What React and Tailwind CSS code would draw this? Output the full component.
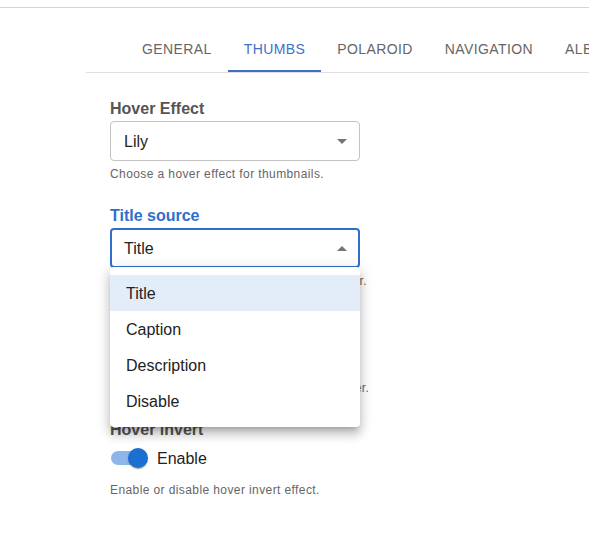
import React from "react";

const tabs = ["General", "Thumbs", "Polaroid", "Navigation", "Albums"];

const Arrow = ({ up }) => (
  <svg width="10" height="5" viewBox="0 0 10 5" className="shrink-0">
    <path d={up ? "M0 5 5 0l5 5z" : "M0 0l5 5 5-5z"} fill="#757575" />
  </svg>
);

const Field = ({ label, value, helper, focused, open }) => (
  <div className="mb-5">
    <div
      className={`text-base leading-6 font-bold ${
        focused ? "text-[#2f6fcb]" : "text-[#555555]"
      }`}
    >
      {label}
    </div>
    <div
      className={`h-10 flex items-center justify-between rounded-[4px] ${
        focused ? "border-2 border-[#2f6fcb] pl-[12px] pr-[11px]" : "border border-[#c4c4c4] pl-[13px] pr-3"
      }`}
    >
      <span className="relative top-px text-base text-[#222222]">{value}</span>
      <Arrow up={open} />
    </div>
    <div className="mt-[3px] text-xs leading-5 tracking-[0.4px] text-[#666666] whitespace-nowrap">
      {helper}
    </div>
  </div>
);

export default function App() {
  return (
    <div className="relative w-[589px] h-[536px] overflow-hidden bg-white font-['Liberation_Sans',Arial,sans-serif]">
      <div className="mt-[7px] h-px bg-[#d4d4d4]" />

      {/* tabs */}
      <div className="mt-4 ml-[86px] flex border-b border-[#e0e0e0] overflow-hidden">
        <div className="w-10 shrink-0" />
        {tabs.map((t) => {
          const active = t === "Thumbs";
          return (
            <div
              key={t}
              className={`relative h-12 px-4 pt-[2px] flex items-center shrink-0 text-sm uppercase tracking-[0.4px] ${
                active ? "text-[#3d72c9]" : "text-[#666666]"
              }`}
            >
              {t}
              {active && (
                <span className="absolute left-0 right-0 bottom-0 h-[2px] bg-[#3d70c4]" />
              )}
            </div>
          );
        })}
      </div>

      {/* form */}
      <div className="ml-[110px] w-[250px] pt-[24px]">
        <Field
          label="Hover Effect"
          value="Lily"
          helper="Choose a hover effect for thumbnails."
        />
        <Field
          label="Title source"
          value="Title"
          helper="Select the source of the title for thumb hover."
          focused
          open
        />
        <Field
          label="Description source"
          value="Caption"
          helper="Select the source of the caption on the hover."
        />

        <div className="text-base leading-6 font-bold text-[#555555]">
          Hover invert
        </div>
        <div className="h-8 flex items-center">
          <div className="relative ml-px w-[34px] h-[14px] rounded-full bg-[#8db7ea]">
            <span className="absolute -right-[3px] -top-[3px] w-5 h-5 rounded-full bg-[#1b6fd0] shadow-[0_2px_1px_-1px_rgba(0,0,0,0.2),0_1px_1px_0_rgba(0,0,0,0.14),0_1px_3px_0_rgba(0,0,0,0.12)]" />
          </div>
          <span className="relative top-px ml-[12px] text-base text-[#222222]">Enable</span>
        </div>
        <div className="mt-[6px] text-xs leading-5 tracking-[0.4px] text-[#666666] whitespace-nowrap">
          Enable or disable hover invert effect.
        </div>
      </div>

      {/* open menu */}
      <div className="absolute left-[110px] top-[267px] w-[250px] py-2 rounded-[4px] bg-white shadow-[0_5px_5px_-3px_rgba(0,0,0,0.2),0_8px_10px_1px_rgba(0,0,0,0.14),0_3px_14px_2px_rgba(0,0,0,0.12)]">
        {["Title", "Caption", "Description", "Disable"].map((o, i) => (
          <div
            key={o}
            className={`h-9 px-4 pt-[2px] flex items-center text-base text-[#222222] ${
              i === 0 ? "bg-[#e3edf9]" : ""
            }`}
          >
            {o}
          </div>
        ))}
      </div>
    </div>
  );
}
